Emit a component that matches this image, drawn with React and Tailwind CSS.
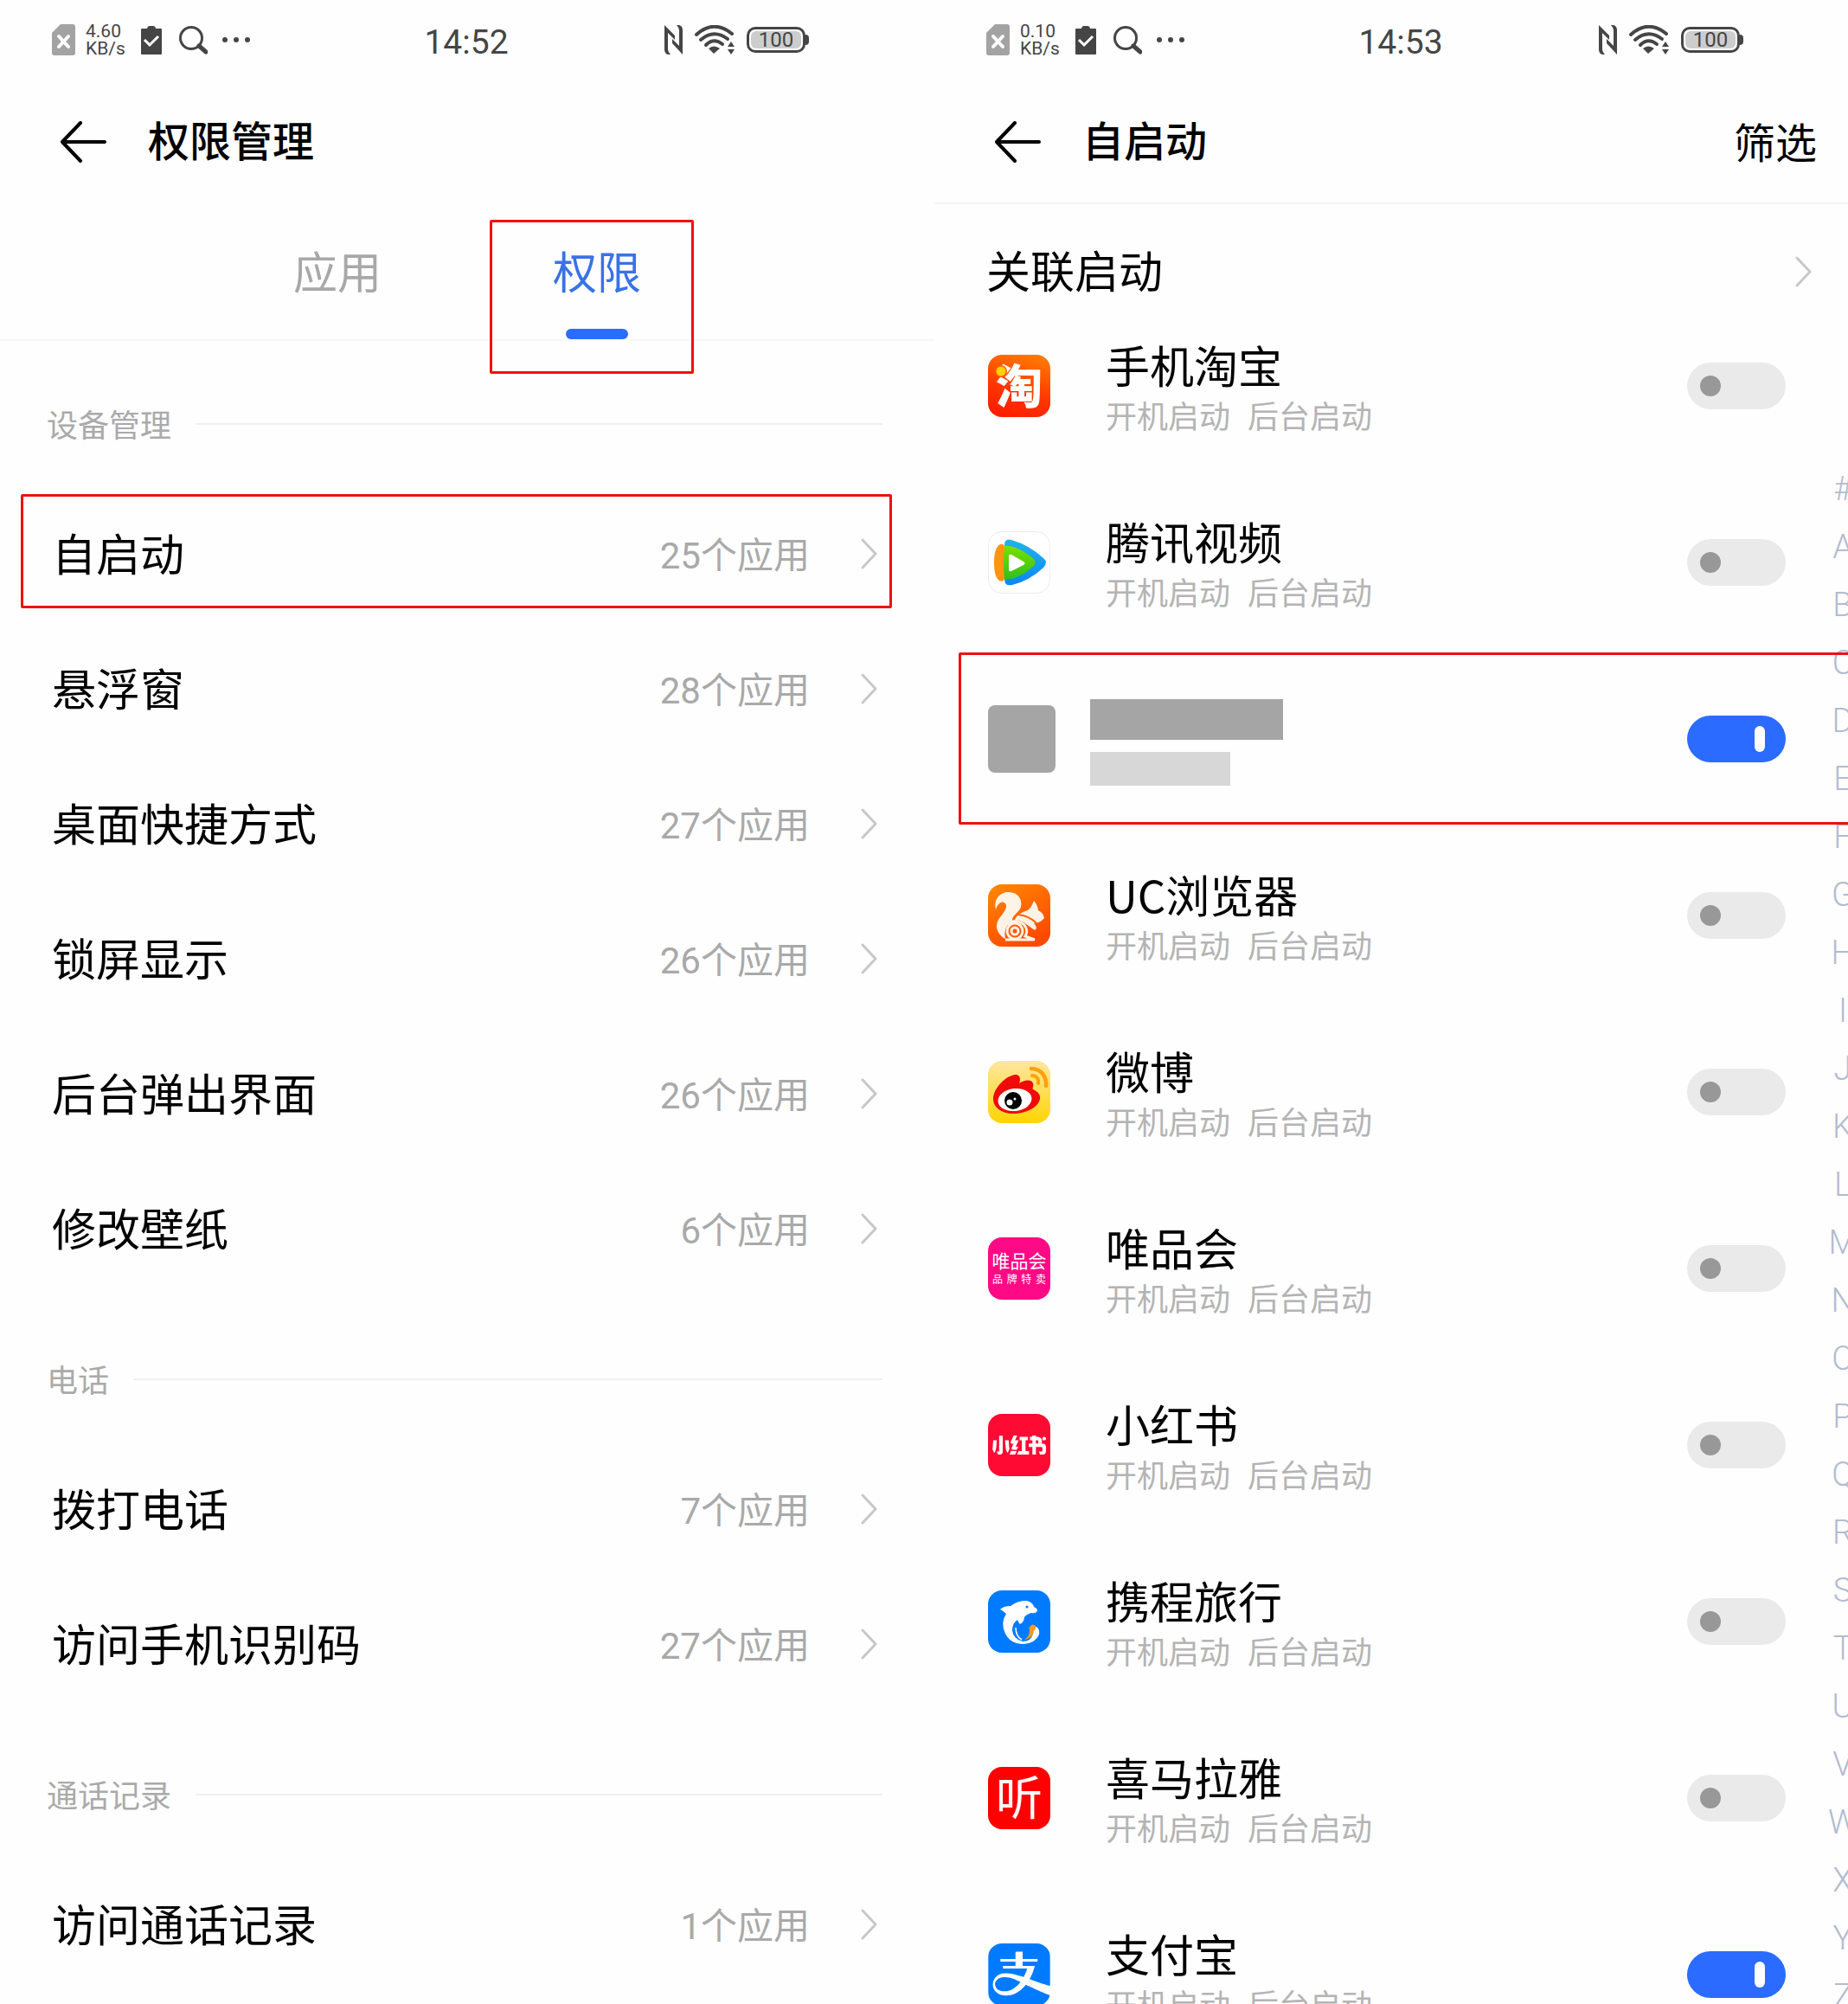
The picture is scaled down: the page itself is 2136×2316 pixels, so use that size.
import { useState } from "react";
import { SiAlipay, SiXiaohongshu } from "react-icons/si";

const SECTIONS = [
  {
    title: "设备管理",
    items: [
      { name: "自启动", count: 25, marked: true },
      { name: "悬浮窗", count: 28 },
      { name: "桌面快捷方式", count: 27 },
      { name: "锁屏显示", count: 26 },
      { name: "后台弹出界面", count: 26 },
      { name: "修改壁纸", count: 6 },
    ],
  },
  {
    title: "电话",
    items: [
      { name: "拨打电话", count: 7 },
      { name: "访问手机识别码", count: 27 },
    ],
  },
  {
    title: "通话记录",
    items: [{ name: "访问通话记录", count: 1 }],
  },
];

const INDEX = "#ABCDEFGHIJKLMNOPQRSTUVWXYZ".split("");

/* ---------- status bar ---------- */

function SimIcon() {
  return (
    <svg width="27" height="36" viewBox="0 0 27 36">
      <path d="M10 0H24a3 3 0 0 1 3 3V33a3 3 0 0 1-3 3H3a3 3 0 0 1-3-3V10Z" fill="#a3a3a3" />
      <path d="M8 14 19 26M19 14 8 26" stroke="#fff" strokeWidth="4" strokeLinecap="round" />
    </svg>
  );
}

function ClipboardIcon() {
  return (
    <svg width="24" height="33" viewBox="0 0 24 33">
      <path d="M1 3H7Q7.500 0 10 0H14Q16.500 0 17 3H23a1 1 0 0 1 1 1V32a1 1 0 0 1-1 1H1a1 1 0 0 1-1-1V4a1 1 0 0 1 1-1Z" fill="#454545" />
      <path d="M4 16 10 22 20 12" fill="none" stroke="#fff" strokeWidth="3" />
    </svg>
  );
}

function SearchIcon() {
  return (
    <svg width="33" height="33" viewBox="0 0 33 33" fill="none" stroke="#454545">
      <circle cx="14" cy="14" r="12.500" strokeWidth="3" />
      <path d="M23 23 31 30" strokeWidth="5" strokeLinecap="round" />
    </svg>
  );
}

function DotsIcon() {
  return (
    <svg width="34" height="8" viewBox="0 0 34 8" fill="#454545">
      <circle cx="4" cy="4" r="3" />
      <circle cx="17" cy="4" r="3" />
      <circle cx="30" cy="4" r="3" />
    </svg>
  );
}

function NfcIcon() {
  return (
    <svg width="21" height="34" viewBox="0 0 21 34" fill="#454545">
      <path d="M0 0 12 12V17L4 9V28Q4 31 7 34H4Q0 33 0 28Z" />
      <path d="M21 34 9 21V16L17 24V6Q17 3 14 0H17Q21 1 21 6Z" />
    </svg>
  );
}

function WifiIcon() {
  return (
    <svg width="46" height="34" viewBox="0 0 46 34" fill="none" stroke="#454545" strokeWidth="4" strokeLinecap="round">
      <path d="M2 11Q22-7 43 10" />
      <path d="M7 17Q22 4 38 16" />
      <path d="M13 23Q22 14 32 22" />
      <path d="M16 27Q22 22 29 27L22 33Z" fill="#454545" stroke="none" />
      <path d="M38 25 42 19 46 25ZM38 28 42 34 46 28Z" fill="#454545" stroke="none" />
    </svg>
  );
}

function Battery() {
  return (
    <div className="flex items-center">
      <div className="flex h-[30px] w-[68px] rounded-[10px] border-3 border-[#454545] p-[2px]">
        <div className="flex flex-1 items-center justify-center rounded-md bg-[#cdcdcd] text-2xl leading-none text-[#454545]">
          100
        </div>
      </div>
      <div className="h-3 w-1 rounded-r-sm bg-[#454545]" />
    </div>
  );
}

function StatusBar({ rate, time }) {
  return (
    <div className="grid h-23 grid-cols-[1fr_auto_1fr] items-center pr-[145px] pl-[60px] text-[#454545]">
      <div className="flex items-center">
        <SimIcon />
        <div className="ml-3 w-16 text-[21px] leading-5">
          <div>{rate}</div>
          <div>KB/s</div>
        </div>
        <ClipboardIcon />
        <div className="ml-5">
          <SearchIcon />
        </div>
        <div className="ml-4">
          <DotsIcon />
        </div>
      </div>
      <time className="-mr-[83px] pt-[6px] text-[39px] leading-none">{time}</time>
      <div className="flex items-center justify-end gap-[14px]">
        <NfcIcon />
        <WifiIcon />
        <Battery />
      </div>
    </div>
  );
}

/* ---------- shared parts ---------- */

function Chevron() {
  return (
    <svg width="20" height="36" viewBox="0 0 20 36" fill="none" stroke="#c8c8c8" strokeWidth="3" strokeLinecap="round" strokeLinejoin="round">
      <path d="M3 2 18 18 3 34" />
    </svg>
  );
}

function Header({ title, action }) {
  return (
    <header className="flex h-[142px] items-center gap-12 pt-[2px] pr-[60px] pl-[69px] text-black">
      <button type="button" aria-label="返回">
        <svg width="54" height="48" viewBox="0 0 54 48" fill="none" stroke="#000" strokeWidth="4" strokeLinecap="round" strokeLinejoin="round">
          <path d="M52 24H3M24 2 3 24 24 46" />
        </svg>
      </button>
      <h1 className="flex-1 pt-px text-5xl leading-none font-medium">{title}</h1>
      {action && (
        <button type="button" className="pt-[5px] text-5xl leading-none">
          {action}
        </button>
      )}
    </header>
  );
}

function Mark({ className }) {
  return <div className={`pointer-events-none absolute rounded-xs border-3 border-[#f01010] ${className}`} />;
}

/* ---------- left screen ---------- */

function PermissionScreen() {
  return (
    <section className="min-w-0">
      <StatusBar rate="4.60" time="14:52" />
      <Header title="权限管理" />
      <div role="tablist" className="flex h-40 justify-center border-b-2 border-[#f7f7f7] text-[51px] leading-none">
        <button type="button" role="tab" aria-selected="false" className="w-[300px] pt-[6px] text-[#a8a8a8]">
          应用
        </button>
        <button type="button" role="tab" aria-selected="true" className="relative w-[300px] pt-[6px] text-[#3a72e6]">
          权限
          <span className="absolute inset-x-[114px] bottom-0 h-3 rounded-full bg-[#2b6bff]" />
          <Mark className="top-5 right-[38px] -bottom-10 left-[26px]" />
        </button>
      </div>
      {SECTIONS.map((s) => (
        <div key={s.title}>
          <h2 className="flex h-[168px] items-center gap-7 pt-6 pr-[60px] pl-[54px] text-4xl leading-none text-[#aaaaaa]">
            <span className="pt-[6px]">{s.title}</span>
            <span className="h-[2px] flex-1 bg-[#f0f0f0]" />
          </h2>
          <ul>
            {s.items.map((it) => (
              <li key={it.name} className="relative">
                <button type="button" className="flex h-39 w-full items-center pr-[66px] pl-[60px] text-left">
                  <span className="flex-1 pt-[5px] text-[51px] leading-none text-black">{it.name}</span>
                  <span className="mr-[58px] pt-[5px] text-[42px] leading-none text-[#a9a9a9]">{it.count}个应用</span>
                  <Chevron />
                </button>
                {it.marked && <Mark className="top-[9px] right-[49px] bottom-[15px] left-6" />}
              </li>
            ))}
          </ul>
        </div>
      ))}
    </section>
  );
}

/* ---------- app logos ---------- */

function TaobaoLogo() {
  return (
    <svg viewBox="0 0 72 72" className="size-18 rounded-2xl">
      <defs>
        <linearGradient id="tb" x1="0.700" y1="0" x2="0.400" y2="1">
          <stop offset="0" stopColor="#ff7a00" />
          <stop offset="0.600" stopColor="#ff3600" />
          <stop offset="1" stopColor="#ff1e00" />
        </linearGradient>
      </defs>
      <rect width="72" height="72" fill="url(#tb)" />
      <text x="36" y="57" textAnchor="middle" fontSize="54" fontWeight="900" fill="#fff">
        淘
      </text>
      <circle cx="15" cy="19" r="7" fill="#ff5a00" />
      <circle cx="15" cy="19" r="5.500" fill="#ffd200" />
    </svg>
  );
}

function TencentVideoLogo() {
  return (
    <svg viewBox="0 0 72 72" className="size-18">
      <defs>
        <linearGradient id="tvb" x1="0" y1="0" x2="0" y2="1">
          <stop offset="0" stopColor="#22b4e8" />
          <stop offset="1" stopColor="#0a86f5" />
        </linearGradient>
        <linearGradient id="tvg" x1="0" y1="0" x2="0" y2="1">
          <stop offset="0" stopColor="#7be000" />
          <stop offset="1" stopColor="#2fbf1e" />
        </linearGradient>
      </defs>
      <rect x="0.500" y="0.500" width="71" height="71" rx="15.500" fill="#fff" stroke="#ececec" />
      <path d="M14 15Q18 14 19 18V55Q18 59 13 57Q7 53 7 36Q7 19 14 15Z" fill="#ff9410" />
      <path d="M19 16Q19 8 27 10Q48 16 64 31Q70 36 64 42Q48 57 28 62Q19 64 19 55Z" fill="url(#tvb)" />
      <path d="M19 17Q31 15 52 31Q57 36 52 41Q35 56 19 56Q17 36 19 17Z" fill="url(#tvg)" />
      <path d="M24 29Q24 26 27 27L41 35Q44 37 41 39L27 46Q24 47 24 44Z" fill="#fff" />
    </svg>
  );
}

function UcLogo() {
  return (
    <svg viewBox="0 0 72 72" className="size-18 rounded-2xl">
      <defs>
        <linearGradient id="uc" x1="0" y1="0" x2="0.500" y2="1">
          <stop offset="0" stopColor="#ff8a00" />
          <stop offset="1" stopColor="#ff4a00" />
        </linearGradient>
      </defs>
      <rect width="72" height="72" fill="url(#uc)" />
      <path d="M9 29C6 17 14 9 24 9C35 9 40 18 38 26C36 33 28 35 28 42C22 46 18 52 20 63C8 56 8 45 14 38C19 32 23 26 20 22C16 18 11 22 9 29Z" fill="#fff3e6" />
      <path d="M31 41C33 35 40 32 46 30Q50 27 53 19Q57 23 58 30Q64 33 65 39Q60 45 53 45Q58 50 54 53L44 46Q38 41 31 41Z" fill="#fff3e6" />
      <path d="M34 35Q48 36 57 46" fill="none" stroke="#ff6400" strokeWidth="2" />
      <circle cx="31" cy="54" r="9" fill="none" stroke="#fff3e6" strokeWidth="3" />
      <circle cx="31" cy="54" r="4" fill="none" stroke="#fff3e6" strokeWidth="3" />
      <path d="M22 47Q32 38 42 47Q47 54 43 60L54 64H20" fill="none" stroke="#fff3e6" strokeWidth="3" />
    </svg>
  );
}

function WeiboLogo() {
  return (
    <svg viewBox="0 0 72 72" className="size-18 rounded-2xl">
      <defs>
        <linearGradient id="wb" x1="0" y1="0" x2="0" y2="1">
          <stop offset="0" stopColor="#ffe6a0" />
          <stop offset="0.500" stopColor="#ffdf55" />
          <stop offset="1" stopColor="#ffd400" />
        </linearGradient>
      </defs>
      <rect width="72" height="72" fill="url(#wb)" />
      <path d="M6 44C6 32 20 17 32 16C37 16 38 21 36 26C42 22 50 21 52 26C53 29 51 31 52 33C57 35 61 39 60 44C58 54 44 61 29 61C16 61 6 54 6 44Z" fill="#f00a0a" />
      <ellipse cx="31" cy="45" rx="19.500" ry="13" fill="#fff" transform="rotate(-7 31 45)" />
      <circle cx="29" cy="46" r="10" fill="#000" />
      <circle cx="25" cy="48" r="3.500" fill="#fff" />
      <circle cx="31" cy="44" r="1.500" fill="#fff" />
      <path d="M50 9C61 9 68 18 67 29" fill="none" stroke="#ffa00a" strokeWidth="4.500" strokeLinecap="round" />
      <path d="M51 17C56 17 59 21 58 26" fill="none" stroke="#ffa00a" strokeWidth="4" strokeLinecap="round" />
    </svg>
  );
}

function VipLogo() {
  return (
    <div className="flex size-18 flex-col items-center justify-center gap-1 rounded-2xl bg-[#ff0a86] text-white">
      <span className="text-[21px] leading-none">唯品会</span>
      <span className="flex w-[62px] justify-between text-xs leading-none">
        <span>品</span>
        <span>牌</span>
        <span>特</span>
        <span>卖</span>
      </span>
    </div>
  );
}

function XiaohongshuLogo() {
  return (
    <div className="flex size-18 items-center justify-center rounded-2xl bg-[#ff0a33] text-white">
      <SiXiaohongshu className="size-[62px]" />
    </div>
  );
}

function CtripLogo() {
  return (
    <svg viewBox="0 0 72 72" className="size-18 rounded-2xl">
      <rect width="72" height="72" fill="#007bff" />
      <path d="M14 22Q18 18 26 18Q35 11 45 12Q52 14 53 19Q57 21 57 23Q56 27 50 26Q44 28 42 31Q42 36 37 39Q35 37 34 34Q28 38 28 46Q29 56 40 59Q50 59 52 50Q53 42 56 42Q60 45 59 51Q55 61 41 62Q26 62 20 50Q14 38 21 27Q18 24 14 22Z" fill="#fff" />
      <path d="M32 43Q32 53 39 57" fill="none" stroke="#fff" strokeWidth="1.500" />
      <circle cx="45" cy="19" r="1.500" fill="#007bff" />
      <path d="M49 41Q52 38 55 41Q56 44 53 47Q52 55 42 57Q48 53 48 47Q47 43 49 41Z" fill="#f59a23" />
    </svg>
  );
}

function XimalayaLogo() {
  return (
    <svg viewBox="0 0 72 72" className="size-18 rounded-2xl">
      <rect width="72" height="72" fill="#fe0000" />
      <text x="36" y="56" textAnchor="middle" fontSize="54" fill="#fff">
        听
      </text>
    </svg>
  );
}

function AlipayLogo() {
  return (
    <div className="size-18 overflow-hidden rounded-2xl bg-white text-[#007bff]">
      <SiAlipay className="size-18" />
    </div>
  );
}

/* ---------- right screen ---------- */

const APPS = [
  { name: "手机淘宝", Logo: TaobaoLogo },
  { name: "腾讯视频", Logo: TencentVideoLogo },
  { name: "", on: true },
  { name: "UC浏览器", Logo: UcLogo },
  { name: "微博", Logo: WeiboLogo },
  { name: "唯品会", Logo: VipLogo },
  { name: "小红书", Logo: XiaohongshuLogo },
  { name: "携程旅行", Logo: CtripLogo },
  { name: "喜马拉雅", Logo: XimalayaLogo },
  { name: "支付宝", Logo: AlipayLogo, on: true },
];

function Toggle({ label, initial }) {
  const [on, setOn] = useState(initial);
  return (
    <input
      type="checkbox"
      role="switch"
      aria-label={label}
      checked={on}
      onChange={() => setOn(!on)}
      className="relative h-[54px] w-[114px] appearance-none rounded-full bg-[#eaeaea] before:absolute before:top-[15px] before:left-[15px] before:size-6 before:rounded-full before:bg-[#989898] checked:bg-[#2b6bff] checked:before:top-3 checked:before:left-[78px] checked:before:h-[30px] checked:before:w-3 checked:before:bg-white"
    />
  );
}

function AppRow({ app }) {
  const { name, Logo, on = false } = app;
  return (
    <li className="relative flex h-51 items-center pr-24 pl-[62px]">
      {Logo ? (
        <>
          <Logo />
          <div className="ml-16 flex-1 pt-[5px]">
            <div className="font-['Noto_Sans_CJK_SC',sans-serif] text-[51px] leading-16 text-black">{name}</div>
            <div className="mt-1 flex gap-5 text-4xl leading-[52px] text-[#b4b4b4]">
              <span>开机启动</span>
              <span>后台启动</span>
            </div>
          </div>
        </>
      ) : (
        <>
          <div className="size-[78px] rounded-lg bg-[#a5a5a5]" />
          <div className="ml-10 flex-1 pt-2">
            <div className="h-[47px] w-[223px] bg-[#a5a5a5]" />
            <div className="mt-[14px] h-[39px] w-[162px] bg-[#d7d7d7]" />
          </div>
        </>
      )}
      <Toggle label={name || "应用"} initial={on} />
      {!Logo && <Mark className="top-[2px] -right-2 bottom-[3px] left-7 z-10" />}
    </li>
  );
}

function AutoStartScreen() {
  return (
    <section className="relative min-w-0">
      <StatusBar rate="0.10" time="14:53" />
      <div className="border-b-2 border-[#f5f5f5]">
        <Header title="自启动" action="筛选" />
      </div>
      <button type="button" className="flex h-27 w-full items-center pt-12 pr-[66px] pl-[60px] text-left">
        <span className="flex-1 pt-[3px] text-[51px] leading-none text-black">关联启动</span>
        <Chevron />
      </button>
      <ul>
        {APPS.map((app) => (
          <AppRow key={app.name} app={app} />
        ))}
      </ul>
      <nav aria-label="字母索引" className="absolute top-[532px] right-3 flex w-9 flex-col items-center text-[38px] leading-[67px] font-light text-[#b3bbd0]">
        {INDEX.map((c) => (
          <a key={c} href="#">
            {c}
          </a>
        ))}
      </nav>
    </section>
  );
}

export default function App() {
  return (
    <div className="h-screen overflow-hidden bg-[#fefefe] font-['Roboto','Noto_Sans_CJK_SC',sans-serif]">
      <div className="grid w-[calc(100%+24px)] grid-cols-2">
        <PermissionScreen />
        <AutoStartScreen />
      </div>
    </div>
  );
}
